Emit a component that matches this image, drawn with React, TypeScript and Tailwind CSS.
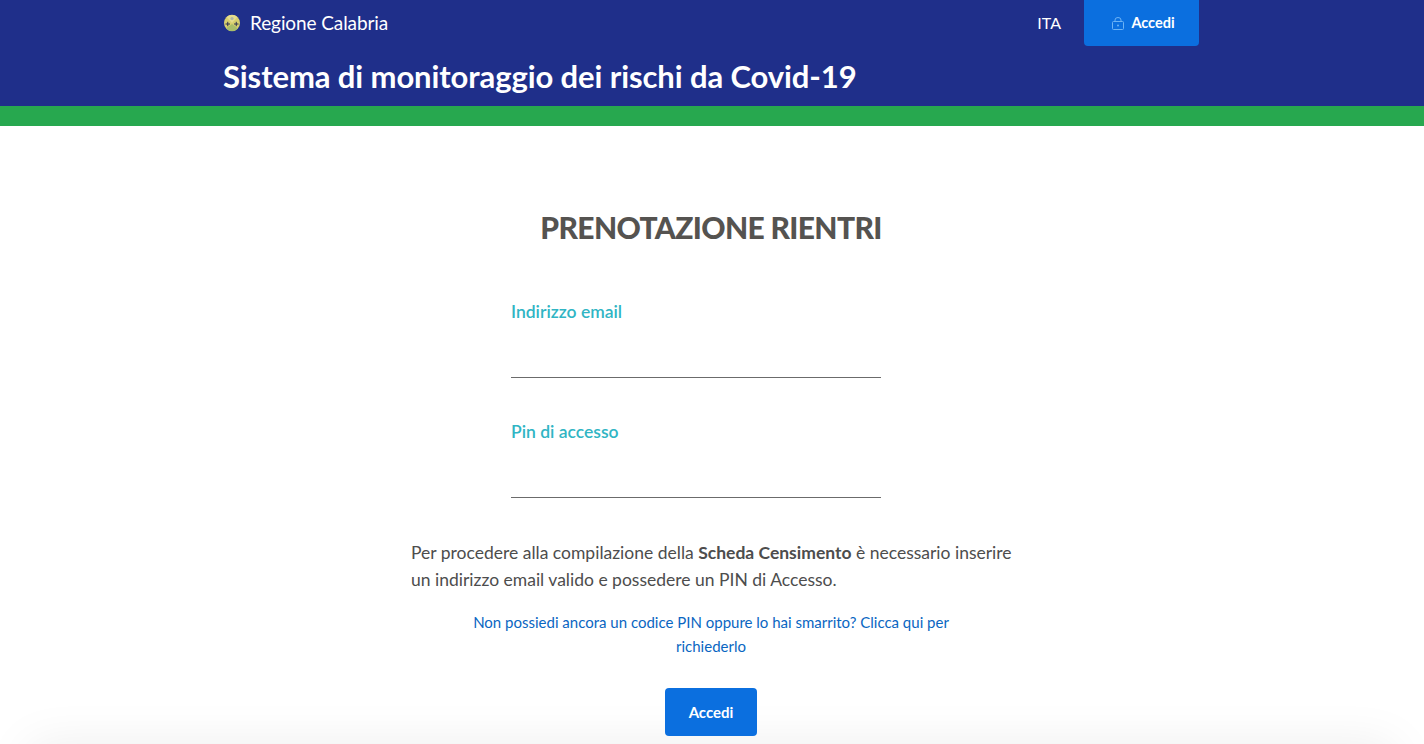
import React from "react";

function Logo() {
  return (
    <svg width="18" height="18" viewBox="0 0 18 18" className="shrink-0">
      <circle cx="9" cy="9" r="8" fill="#d8cf6e" />
      <path d="M9 9 L3.5 3 A8 8 0 0 1 14.5 3 Z" fill="#e6dc8c" />
      <path d="M9 10 L15 14.5 A8 8 0 0 1 3 14.5 Z" fill="#a9bd6a" />
      <path d="M2.5 10h4.5M4.75 7.8v4.4M11 10h4.5M13.25 7.8v4.4" stroke="#2c3350" strokeWidth="1" />
      <circle cx="9" cy="4.5" r="1.6" fill="#aeb6a6" />
    </svg>
  );
}

function Lock() {
  return (
    <svg width="12" height="13" viewBox="0 0 12 13" fill="none" stroke="#6db3f5" strokeWidth="1" className="shrink-0">
      <rect x="0.5" y="4.5" width="11" height="8" rx="1" />
      <path d="M3 4.5V3a3 2.5 0 0 1 6 0v1.5" />
      <circle cx="6" cy="8.5" r="1" fill="#6db3f5" stroke="none" />
    </svg>
  );
}

function Field({ label }: { label: string }) {
  return (
    <div className="w-[370px] h-[120px]">
      <div className="text-[17.5px] leading-[24px] font-semibold text-[#30b5c4] pt-[4px]">{label}</div>
      <div className="h-[53px]" />
      <div className="h-px bg-[#6b6b6b]" />
    </div>
  );
}

export default function App() {
  return (
    <div className="h-[744px] overflow-hidden bg-white font-['Lato','Noto_Sans',sans-serif]">
      <header className="bg-[#1f2f8a] h-[106px] text-white">
        <div className="w-[976px] ml-[223px]">
          <div className="flex items-start justify-between h-[46px]">
            <div className="flex items-center gap-[9px] h-[46px]">
              <Logo />
              <span className="text-[19px] tracking-[-0.1px]">Regione Calabria</span>
            </div>
            <div className="flex items-start">
              <span className="text-[16px] leading-[46px] mr-[23px]">ITA</span>
              <button className="w-[115px] h-[46px] pl-[4px] bg-[#0b6fdf] rounded-b-[4px] flex items-center justify-center gap-[7px] text-[14.5px] font-bold">
                <Lock />
                Accedi
              </button>
            </div>
          </div>
          <h1 className="text-[31px] leading-[42px] mt-[9px] font-bold tracking-[-0.1px]">
            Sistema di monitoraggio dei rischi da Covid-19
          </h1>
        </div>
      </header>
      <div className="h-[20px] bg-[#27a84f]" />
      <main className="w-[1422px] flex flex-col items-center">
        <h2 className="mt-[81px] text-[30px] leading-[40px] font-black text-[#555350] tracking-[-0.65px]">
          PRENOTAZIONE RIENTRI
        </h2>
        <div className="w-[600px]">
          <div className="mt-[49px] pl-[100px] flex flex-col">
            <Field label="Indirizzo email" />
            <Field label="Pin di accesso" />
          </div>
          <p className="mt-[3px] whitespace-nowrap text-[17.5px] leading-[27px] text-[#4d4d4d]">
            Per procedere alla compilazione della <b>Scheda Censimento</b> è necessario inserire
            <br />
            un indirizzo email valido e possedere un PIN di Accesso.
          </p>
        </div>
        <a className="w-[500px] mt-[17px] text-center text-[15px] leading-[24px] text-[#0a66c2]">
          Non possiedi ancora un codice PIN oppure lo hai smarrito? Clicca qui per richiederlo
        </a>
        <button className="mt-[30px] shrink-0 w-[92px] h-[48px] bg-[#0b6fdf] rounded-[4px] text-white text-[15px] font-bold">
          Accedi
        </button>
      </main>
      <div className="mt-[10px] mx-[30px] h-[60px] bg-white shadow-[0_0_50px_rgba(0,0,0,0.08)]" />
    </div>
  );
}
